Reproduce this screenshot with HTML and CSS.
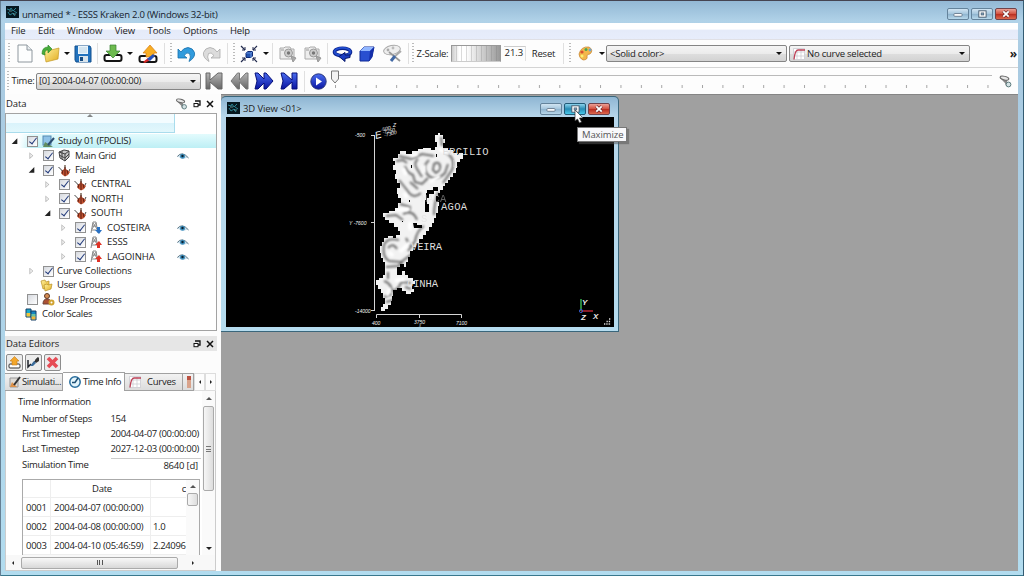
FILE: index.html
```html
<!DOCTYPE html>
<html lang="en">
<head>
<meta charset="utf-8">
<title>unnamed * - ESSS Kraken 2.0</title>
<link rel="stylesheet" href="styles.css">
</head>
<body>
<svg class="defs" width="0" height="0">
  <defs>
    <linearGradient id="gold" x1="0" y1="0" x2="1" y2="1"><stop offset="0" stop-color="#fff3a0"/><stop offset="1" stop-color="#e2ac20"/></linearGradient>
    <linearGradient id="blue" x1="0" y1="0" x2="0" y2="1"><stop offset="0" stop-color="#4a6df0"/><stop offset="1" stop-color="#0a15a0"/></linearGradient>
    <linearGradient id="grey" x1="0" y1="0" x2="0" y2="1"><stop offset="0" stop-color="#b5b5b5"/><stop offset="1" stop-color="#666"/></linearGradient>
    <symbol id="logo" viewBox="0 0 13 12"><rect width="13" height="12" fill="#06171f"/><path d="M1 3l3 1 1-2 2 3 3-3M2 6l2 3 3-2 2 3M8 5l3 2" stroke="#2b8292" fill="none"/><path d="M3 5h3M7 8h3" stroke="#8fd0d0" stroke-width=".6"/></symbol>
    <symbol id="eye" viewBox="0 0 12 8"><path d="M.5 4.5Q5-1 11 5.5Q5 8 .5 4.5" fill="#c9dfec"/><path d="M.3 4.5Q5-1.5 11.6 6" fill="none" stroke="#5b7686"/><circle cx="5.5" cy="4.2" r="2.5" fill="#3f8fbd"/><circle cx="5.5" cy="4" r="1.2" fill="#0b2030"/></symbol>
    <symbol id="field" viewBox="0 0 13 13"><path d="M.5 3l3 3 2 3M12 5l-2 4" stroke="#444" fill="none"/><path d="M7 1v10" stroke="#58402e" stroke-width="1.2"/><path d="M3 8l2-2 2-2 2 2 3 2-2 3-3 1.500-3-2z" fill="#c2512f"/><path d="M5 6l-1 4M9 6l1 4M7 3v9" stroke="#5c2116"/></symbol>
    <symbol id="derrick" viewBox="0 0 13 13"><path d="M1 12L3 1h3l2 11M2 5h5M2 9h6M3 2l4 6M6 2L2 8" stroke="#888" fill="none"/></symbol>
    <symbol id="camera" viewBox="0 0 19 18"><path d="M2 3h4l1-1h5l1 2h3v10H2z" fill="#ededed" stroke="#aaa"/><circle cx="10.5" cy="8" r="4" fill="#ccc" stroke="#999"/><circle cx="10.5" cy="8" r="1.7" fill="#777"/><path d="M3 5h3M13 11l5 2-3 4z" stroke="#999" fill="#aaa"/></symbol>
    <symbol id="float" viewBox="0 0 8 8"><path d="M2 1h5v4H5" fill="none" stroke="#111" stroke-width="1.3"/><rect x="1" y="3.5" width="4" height="3.2" fill="#fff" stroke="#111"/></symbol>
    <symbol id="close" viewBox="0 0 8 8"><path d="M1 1l6 6M7 1L1 7" stroke="#111" stroke-width="1.5"/></symbol>
    <symbol id="curve" viewBox="0 0 12 12"><path d="M.5.5h11v11H.5zM4 1v10M8 1v10M1 4h10M1 8h10" fill="#fff" stroke="#c5c5cd" stroke-width=".7"/><path d="M1 11.5Q2 2 5 2h7" fill="none" stroke="#bd4055" stroke-width="1.3"/></symbol>
    <symbol id="funnel" viewBox="0 0 13 13"><path d="M1 3l5 5 1 3 2-1-1-4 2-3z" fill="#888"/><ellipse cx="5.5" cy="3" rx="4.5" ry="1.8" transform="rotate(14 5 3)" fill="#e6e6e6" stroke="#666"/><circle cx="9.5" cy="9.5" r="2.4" fill="#d4e2e4" stroke="#5c7b7d"/></symbol>
    <symbol id="minimize" viewBox="0 0 22 11"><rect x="6.5" y="5" width="9" height="3" rx="1" fill="#fff" stroke="#64778b"/></symbol>
    <symbol id="maximize" viewBox="0 0 22 11"><rect x="7.5" y="2" width="8" height="7" fill="#fff" stroke="#42566a"/><rect x="10" y="4.3" width="3" height="2.3" fill="#7fa0b9" stroke="#42566a" stroke-width=".7"/></symbol>
    <symbol id="cross" viewBox="0 0 22 11"><path d="M8 2.5l6 6m0-6l-6 6" stroke="#62252a" stroke-width="3.4"/><path d="M8 2.5l6 6m0-6l-6 6" stroke="#fff" stroke-width="2"/></symbol>
  </defs>
</svg>
<div class="app">
  <header class="titlebar">
    <svg class="logo"><use href="#logo"/></svg><h1>unnamed * - ESSS Kraken 2.0 (Windows 32-bit)</h1>
    <div class="controls"><svg class="ctl"><use href="#minimize"/></svg><svg class="ctl"><use href="#maximize"/></svg><svg class="ctl red"><use href="#cross"/></svg></div>
  </header>
  <div class="client">
    <nav class="menubar"><span>File</span><span>Edit</span><span>Window</span><span>View</span><span>Tools</span><span>Options</span><span>Help</span></nav>
    <div class="toolbar main-tools">
      <i class="grip"></i>
      <svg width="16" height="19"><path d="M1 1h9l5 5v12H1z" fill="#fdfefe" stroke="#8e979e"/><path d="M10 1v5h5" fill="#e8edf0" stroke="#8e979e"/></svg>
      <svg width="19" height="18"><path d="M3 5l5-2 2 2 8-2-1 11-12 3z" fill="url(#gold)" stroke="#c49a25" stroke-width=".7"/><path d="M1 9q0-7 6-7V0l4 4-4 4V5q-4 0-3 5z" fill="#48ad3a" stroke="#278223" stroke-width=".6"/></svg>
      <i class="arrow"></i>
      <svg width="18" height="18"><path d="M1 1h15l1 2v14H2l-1-2z" fill="#2272bd" stroke="#12518f"/><rect x="4" y="1" width="10" height="8" fill="#eaf5fc"/><path d="M5 3h8M5 5h8M5 7h8" stroke="#a9c6d8" stroke-width=".7"/><rect x="5" y="11" width="9" height="6" fill="#d9e4ec"/><rect x="6" y="12" width="3" height="4" fill="#154a80"/></svg>
      <i class="sep"></i>
      <svg width="20" height="19"><rect x="1.5" y="11" width="17" height="6" rx="2" fill="#fff" stroke="#151515" stroke-width="2"/><path d="M7 1h6v6h4l-7 7-7-7h4z" fill="#6dba4f" stroke="#368033" stroke-width=".7"/></svg>
      <i class="arrow"></i>
      <svg width="20" height="20"><rect x="1.5" y="12" width="17" height="6" rx="2" fill="#fff" stroke="#151515" stroke-width="2"/><path d="M8 13V9H5l7-8 7 8h-3v4z" fill="#f8ae24" stroke="#d57d16" stroke-width=".7"/><path d="M5 18l5-4 2 2-5 3z" fill="#d52626"/><path d="M9 15l6-5 2 2-5 5z" fill="#2451bd"/></svg>
      <i class="sep"></i><i class="grip"></i>
      <svg width="19" height="17"><path d="M1 4v9h9L7 10.500q3-4 5.500-2 2 3-.5 8 6.500-4 5.500-9Q16 3 11 2.500 6 3 4 7z" fill="#319bdd" stroke="#146eac" stroke-width=".8"/></svg>
      <svg width="19" height="17"><path d="M18 4v9H9l3-2.500q-3-4-5.500-2-2 3 .5 8Q.5 12.500 1.500 7.500 3 3 8 2.500q5 .5 7 4.500z" fill="#dcdcdc" stroke="#aaa" stroke-width=".8"/></svg>
      <i class="sep"></i><i class="grip"></i>
      <svg width="18" height="18"><path d="M1 1l4 4M17 1l-4 4M1 17l4-4M17 17l-4-4" stroke="#222b4e" stroke-width="1.2"/><path d="M5 2v3H2M13 2v3h3M5 16v-3H2M13 16v-3h3" fill="none" stroke="#222b4e"/><path d="M6 8l2-1.500h4.500V11L11 12.500H6z" fill="#2354b0" stroke="#102b74"/><path d="M6 8h5v5M11 8l2-2" stroke="#83aef0" fill="none" stroke-width=".7"/></svg>
      <i class="arrow"></i><i class="sep"></i>
      <svg width="19" height="18"><use href="#camera"/></svg><svg width="19" height="18"><use href="#camera"/></svg>
      <i class="sep"></i>
      <svg width="21" height="16"><ellipse cx="10.5" cy="6" rx="8" ry="3.8" fill="none" stroke="#0b248f" stroke-width="3.6"/><ellipse cx="10.5" cy="5.7" rx="8" ry="3.8" fill="none" stroke="#234ed0" stroke-width="1.8"/><path d="M13 6.500l-6 4 6 5v-3l5-1V9h-5z" fill="#1a3cc0" stroke="#07196c"/></svg>
      <svg width="16" height="16"><path d="M1 5l4-4h10l-2 10-3 4H1z" fill="#294fd0" stroke="#102b96"/><path d="M1 5l4-4h10l-4 4z" fill="#91b6ff"/><path d="M11 5l4-4-2 10-3 4z" fill="#142eaa"/></svg>
      <svg width="21" height="19"><ellipse cx="10" cy="6" rx="8.5" ry="4.5" transform="rotate(-12 10 6)" fill="#eee" stroke="#aaa"/><circle cx="6" cy="6" r="1.4" fill="#aaa"/><circle cx="11" cy="4" r="1.4" fill="#bbb"/><path d="M7 8l11 9" stroke="#999" stroke-width="1.7"/><path d="M19 7l-7 6" stroke="#aaa" stroke-width="2"/><path d="M13 12l-4 5" stroke="#4269a5" stroke-width="3"/></svg>
      <i class="sep"></i><i class="grip"></i>
      <span class="zlabel">Z-Scale:</span><i class="wheel"></i><span class="zvalue">21.3</span><span class="reset">Reset</span>
      <i class="sep"></i><i class="grip"></i>
      <svg width="15" height="15"><path d="M1 8Q3 0 11 1q5 3 1 7-3 0-3 2 1 4-4 4Q1 12 1 8" fill="#f3b64b" stroke="#c4822f" stroke-width=".7"/><circle cx="4" cy="6" r="1.6" fill="#d94f32"/><circle cx="8" cy="3.5" r="1.5" fill="#4aa750"/><circle cx="12" cy="4" r="1.4" fill="#6da5d6"/><circle cx="4" cy="10" r="1.5" fill="#f9ef71"/></svg>
      <i class="arrow"></i>
      <div class="combo">&lt;Solid color&gt;<i class="arrow"></i></div>
      <div class="combo"><svg width="12" height="12"><use href="#curve"/></svg>No curve selected<i class="arrow"></i></div>
      <b class="more">»</b>
    </div>
    <div class="toolbar time-tools">
      <i class="grip"></i><span class="timelabel">Time:</span><div class="combo time">[0] 2004-04-07 (00:00:00)<i class="arrow"></i></div>
      <svg width="19" height="18"><path d="M1 1h4v7l8-7h4v16h-4l-8-7v7H1z" fill="url(#grey)" stroke="#666"/></svg>
      <svg width="19" height="18"><path d="M9.500 1v7L16 1h2v16h-2l-6.500-7v7h-2L1 9l6.500-8z" fill="url(#grey)" stroke="#777"/></svg>
      <svg width="20" height="18"><path d="M1 1h3l6 6V1h2l7 8-7 8h-2v-6l-6 6H1l2-8z" fill="url(#blue)" stroke="#07107a"/></svg>
      <svg width="19" height="18"><path d="M1 1h3l8 7V1h5v16h-5v-7l-8 7H1l2-8z" fill="url(#blue)" stroke="#07107a"/></svg>
      <i class="sep"></i>
      <svg width="17" height="17"><circle cx="8.5" cy="8.5" r="7.7" fill="url(#blue)" stroke="#28347b"/><path d="M6 4.5l6 4-6 4z" fill="#fff"/></svg>
      <svg class="slider" width="664" height="24"><defs><pattern id="ticks" x="7" width="20.39" height="24" patternUnits="userSpaceOnUse"><path d="M.5 16v3" stroke="#a5a5a5"/></pattern></defs><path d="M8 6.500H664" stroke="#bababa"/><rect x="5" width="659" height="24" fill="url(#ticks)"/><path d="M3.500 2h7v8L7 14l-3.500-4z" fill="#f2f2f2" stroke="#777"/></svg>
      <svg width="13" height="13"><use href="#funnel"/></svg>
    </div>
    <main class="body">
      <aside class="sidebar">
        <div class="docktitle"><h2>Data</h2><svg width="13" height="12"><use href="#funnel"/></svg><svg width="8" height="8"><use href="#float"/></svg><svg width="8" height="8"><use href="#close"/></svg></div>
        <section class="tree">
          <div class="treehead"><i></i></div>
          <div class="row l0 selected"><i class="open"></i><i class="check on"></i><svg class="ico"><rect x="1" y="1" width="8" height="9" fill="#8fc2e7" stroke="#5689b2"/><path d="M1 12l2-5 8 5z" fill="#628d60"/><path d="M6 10l6-7" stroke="#2c4d70" stroke-width="2"/></svg><span>Study 01 (FPOLIS)</span></div>
          <div class="row l1"><i class="shut"></i><i class="check on"></i><svg class="ico"><path d="M1 3l5-2 5 1v6l-4 4-5-3z" fill="#c8c8c8" stroke="#444"/><path d="M1 3l6 2 4-3M7 5v7M4 2v8M1 6l6 3 4-4" stroke="#444" fill="none"/></svg><span>Main Grid</span><svg class="eye"><use href="#eye"/></svg></div>
          <div class="row l1"><i class="open"></i><i class="check on"></i><svg class="ico"><use href="#field"/></svg><span>Field</span></div>
          <div class="row l2"><i class="shut"></i><i class="check on"></i><svg class="ico"><use href="#field"/></svg><span class="caps">CENTRAL</span></div>
          <div class="row l2"><i class="shut"></i><i class="check on"></i><svg class="ico"><use href="#field"/></svg><span class="caps">NORTH</span></div>
          <div class="row l2"><i class="open"></i><i class="check on"></i><svg class="ico"><use href="#field"/></svg><span class="caps">SOUTH</span></div>
          <div class="row l3"><i class="shut"></i><i class="check on"></i><svg class="ico"><use href="#derrick"/><path d="M7 6h3v3h2l-3 4-4-4h2z" fill="#2a72c4"/></svg><span class="caps">COSTEIRA</span><svg class="eye"><use href="#eye"/></svg></div>
          <div class="row l3"><i class="shut"></i><i class="check on"></i><svg class="ico"><use href="#derrick"/><path d="M7 12h3V9h2L9 5 5 9h2z" fill="#df3327"/></svg><span class="caps">ESSS</span><svg class="eye"><use href="#eye"/></svg></div>
          <div class="row l3"><i class="shut"></i><i class="check on"></i><svg class="ico"><use href="#derrick"/><path d="M7 12h3V9h2L9 5 5 9h2z" fill="#df3327"/></svg><span class="caps">LAGOINHA</span><svg class="eye"><use href="#eye"/></svg></div>
          <div class="row l1"><i class="shut"></i><i class="check on"></i><span class="curves">Curve Collections</span></div>
          <div class="row groups"><svg class="ico"><path d="M1 2l4-1 1 2 3-1v6l-6 2z" fill="url(#gold)" stroke="#b99026" stroke-width=".7"/><path d="M4 6l3-1 1 1 4-1-1 5-6 2z" fill="url(#gold)" stroke="#b99026" stroke-width=".7"/></svg><span>User Groups</span></div>
          <div class="row procs"><i class="check"></i><svg class="ico"><circle cx="5" cy="3" r="2.5" fill="#d58c52" stroke="#5b3827"/><path d="M1 11q0-5 4-5t5 5z" fill="#ac5134" stroke="#6d4337"/><circle cx="9.5" cy="9.5" r="2" fill="#fff" stroke="#d0a332" stroke-width="2"/></svg><span>User Processes</span></div>
          <div class="row scales"><svg class="ico"><path d="M1 1h5v8H1z" fill="#19aacb" stroke="#163e66"/><path d="M1.500 5h4v3.500h-4z" fill="#f0c43a"/><path d="M6 3h5v9H6z" fill="#1586c1" stroke="#163e66"/><path d="M6.500 6h4v3h-4z" fill="#6ac3a0"/><path d="M6.500 8.500h4v3h-4z" fill="#f0b63a"/></svg><span>Color Scales</span></div>
        </section>
        <div class="docktitle editors"><h2>Data Editors</h2><svg width="8" height="8"><use href="#float"/></svg><svg width="8" height="8"><use href="#close"/></svg></div>
        <div class="buttons">
          <svg><rect x="2" y="9" width="11" height="4" rx="1" fill="#fff" stroke="#333"/><path d="M5 10V6H3l4.500-4.500L12 6h-2v4z" fill="#f3a72c" stroke="#c27a18" stroke-width=".6"/></svg>
          <svg><path d="M2 5v7l3-3M8 8l4-5" stroke="#20242c" stroke-width="1.5" fill="none"/><path d="M4 11l4-5 2 2-3 3z" fill="#3b6d9c"/><path d="M9 5l3-3 1 1v3l-3 2z" fill="#333"/></svg>
          <svg><path d="M3 3l9 9M12 3l-9 9" stroke="#e64c55" stroke-width="3.6"/></svg>
        </div>
        <div class="tabs">
          <div class="tab sim"><svg width="12" height="12"><path d="M1 2h8v9H1z" fill="#dedbd6" stroke="#999"/><path d="M1 11l2-5 5 5z" fill="#dd9148"/><path d="M5 9l6-8" stroke="#333" stroke-width="2"/></svg>Simulati...</div>
          <div class="tab active"><svg width="12" height="12"><circle cx="6" cy="6" r="5.2" fill="#e4f5fc" stroke="#286d9d" stroke-width="1.5"/><path d="M9 2L6 6.500H3" stroke="#205075" fill="none" stroke-width="1.5"/></svg>Time Info</div>
          <div class="tab crv"><svg width="12" height="12"><use href="#curve"/></svg>Curves</div>
          <div class="tab cut"><i></i></div>
          <div class="scroller"><i class="left"></i></div><div class="scroller"><i class="right"></i></div>
        </div>
        <section class="pane">
          <div class="form">
            <h3>Time Information</h3>
            <dl><dt>Number of Steps</dt><dd>154</dd><dt>First Timestep</dt><dd>2004-04-07 (00:00:00)</dd><dt>Last Timestep</dt><dd>2027-12-03 (00:00:00)</dd><dt>Simulation Time</dt><dd class="field">8640 [d]</dd></dl>
            <div class="tablewrap">
              <div class="table"><b></b><b class="th">Date</b><b class="c">c</b><span>0001</span><span>2004-04-07 (00:00:00)</span><span></span><span>0002</span><span>2004-04-08 (00:00:00)</span><span>1.0</span><span>0003</span><span>2004-04-10 (05:46:59)</span><span>2.24096</span></div>
              <div class="vscroll inner"><i class="up"></i><div class="thumb"></div></div>
            </div>
          </div>
          <div class="vscroll"><i class="up"></i><div class="thumb"><span></span></div><i class="down"></i></div>
          <div class="hscroll"><i class="left"></i><div class="thumb"><span></span></div><i class="right"></i></div>
        </section>
      </aside>
      <section class="workspace">
        <div class="mdi">
          <header class="mdititle"><svg class="logo"><use href="#logo"/></svg><h2>3D View &lt;01&gt;</h2><div class="controls"><svg class="ctl"><use href="#minimize"/></svg><svg class="ctl hot"><use href="#maximize"/></svg><svg class="ctl red"><use href="#cross"/></svg></div></header>
          <svg class="scene" viewBox="226 117 388 210">
            <defs>
              <path id="coast" d="M435 135H438V133H440V135H443V139H445V143H443V148H448V150H453V153H457V155H459V153H463V159H460V162H457V168H456V173H453V177H450V180H448V183H445V186H443V190H440V193H438V196H436V202H439V206H438V213H436V218H434V223H432V227H429V231H426V235H423V239H419V243H416V247H413V251H410V257H408V262H406V267H404V271H405V275H408V278H413V281H415V284H412V289H414V292H411V294H406V291H402V288H397V290H393V296H392V301H391V305H388V309H385V311H381V307H383V304H385V298H383V293H381V289H378V285H376V280H379V278H383V275H385V262H383V258H381V253H380V246H382V242H384V238H388V236H393V238H396V235H400V231H398V227H394V223H389V220H385V217H383V213H389V211H395V208H398V203H401V198H398V194H397V188H400V183H397V179H395V174H396V170H393V165H395V161H393V158H398V154H400V151H406V154H412V151H418V149H423V148H431V150H435V147H437V142H435z"/>
              <clipPath id="land"><use href="#coast"/></clipPath>
              <filter id="soft" x="-20%" y="-20%" width="140%" height="140%"><feGaussianBlur stdDeviation="1.3"/></filter>
            </defs>
            <rect x="226" y="117" width="388" height="210" fill="#000"/>
            <use href="#coast" fill="#f2f2f2"/>
            <g clip-path="url(#land)">
              <g fill="none" stroke="#6c6c6c" stroke-width="2" filter="url(#soft)">
                <path d="M396 161l7-1 4 3M405 166q1 6 8 9l2 7 7 2 6-6M418 159q-5 4-1 10l5 8M429 160q-7 6-2 14 8 9 18-1l3-9M434 164q4-3 6 1 1 5-4 8l-3-3zM446 153q10 5 6 17l-9 13M399 156l12 3 11-5 12 2M399 180l8 10q6 10 14 3M410 182l8 7M400 204l10 3-1 6M403 214q10-5 14 6M386 216l10-1 7 5M424 226q-7 4-9 15l-7 10M441 137l1 9M438 192q-4 12-4 23"/>
                <path d="M399 240q-12-3-15 5-2 12 5 16l12 1 11-8M388 248q5-6 9 1M386 267l12-1 5-4M406 238l4 8M384 281q7 2 8 10 7-1 9-9l10 1M386 302l8-2M384 297l8-3M388 272v7M405 287l6 2"/>
              </g>
              <g fill="none" stroke="#fff" stroke-width="3.5" filter="url(#soft)"><path d="M439 149l10 5M403 168l3 7M411 156l7-2M430 182l10-6M404 193l3 5M396 210l14-1M389 252l4 4M400 252l10-10M395 281l10-2M390 288l-3 8M424 165v8M410 222v8M437 168v1"/></g>
            </g>
            <g fill="#000"><path d="M427 193v-3h6v-3h5v4h-4v3h-5v4h-2v6h2v8h-4v-12h1v-7z"/><path d="M413 223h4v2h5v3h-8z"/><path d="M397 267h3v-3h4v7h-2v4h-5z"/><path d="M411 165h1v3h-1zM436 154h1v3h-1zM409 200h1v2h-1zM402 221h1v1h-1z"/></g>
            <g fill="none" stroke="#d5d5d5"><path d="M374.500 135v176M371 135.500h4M371 222.500h4M371 310.500h4M376.500 318v-3.500h85v3.500M419.500 314v4"/></g>
            <g class="places"><text x="442.5" y="155" textLength="46">ERCILIO</text><text x="452" y="167" opacity=".5">L</text><text x="421" y="202" opacity=".45">MACA</text><text x="441" y="209.5" textLength="26">AGOA</text><text x="421" y="222" opacity=".6">S</text><text x="411" y="250" textLength="31">VEIRA</text><text x="407" y="287" textLength="31">OINHA</text></g>
            <g class="axes"><text x="355" y="137">-500</text><text x="349" y="225">Y -7600</text><text x="355" y="313">-14000</text><text x="372" y="324.5">400</text><text x="414" y="323.5">3750</text><text x="456" y="324.5">7100</text><text class="tiny" x="419" y="326.5">X</text><text x="393" y="127">Z</text></g>
            <g class="axes" transform="rotate(-14 380 135)"><text class="east" x="375" y="138">E</text><text x="382" y="132">-500</text><text x="383" y="135">-7250</text><text x="384" y="138">-7300</text></g>
            <path d="M581 311V299" stroke="#29833b" stroke-width="2"/><path d="M581 311h12" stroke="#b62632" stroke-width="1.5"/><circle cx="581" cy="311" r="1.6" fill="none" stroke="#3454be"/>
            <g class="triad"><text x="582" y="305">Y</text><text x="581" y="320">Z</text><text x="593" y="319">X</text></g>
            <path d="M604 324h7M606.500 321.500h4.500M609 319h2" stroke="#ddd" stroke-width="1.5" stroke-dasharray="1.300 1"/>
          </svg>
          <div class="tooltip">Maximize</div>
          <svg class="cursor" viewBox="0 0 10 15"><path d="M1 1v11l2.500-2 2 4 2-1-2-4H9z" fill="#fff" stroke="#333" stroke-width=".7"/></svg>
        </div>
      </section>
    </main>
  </div>
</div>
</body>
</html>
```
FILE: styles.css
```css
* { box-sizing: border-box; }
body { margin: 0; width: 1024px; height: 576px; overflow: hidden; font: 9.5px/12px "Open Sans", "Noto Sans", sans-serif; letter-spacing: -.23px; color: #222; }
.defs { position: absolute; }
svg { display: block; flex: none; }
h1, h2, h3, dl, dd { margin: 0; font-size: inherit; font-weight: 400; }
.app { height: 576px; display: flex; flex-direction: column; padding: 2px 5px 5px; background: linear-gradient(#93b8d5, #b0d2e8 20px, #a9cae1 60px, #b2dcef); border-top: 1px solid #454452; border-right: 1px solid #345c72; box-shadow: inset 1px 0 #668094, inset 0 -1px #39788d; }
.titlebar { height: 20px; display: flex; align-items: center; flex: none; padding: 1px 0 0 1px; }
.logo { width: 13px; height: 12px; }
.titlebar .logo { margin-top: -3px; }
.titlebar h1 { margin: 2px 0 0 3px; font-size: 9.5px; letter-spacing: -.22px; color: #15212c; white-space: nowrap; }
.titlebar .controls { margin-right: 1px; }
.controls { margin-left: auto; display: flex; gap: 2px; }
.ctl { width: 22px; height: 12px; border: 1px solid #64839b; border-radius: 2px; background: linear-gradient(#d1e4f2, #a5c6dd 48%, #8fb4cf 52%, #b8d8eb); }
.ctl.hot { background: linear-gradient(#8ad3ed, #278bb4 50%, #48c8e9); border-color: #235b77; }
.ctl.red { background: linear-gradient(#eba095, #d35241 48%, #b92d20 52%, #dd684e); border-color: #70424a; }
.client { flex: 1; min-height: 0; display: flex; flex-direction: column; background: #fff; }
.menubar { height: 17px; flex: none; display: flex; align-items: center; gap: 12.6px; padding: 0 6px; background: linear-gradient(#fff 0 38%, #e5ebf9 45%, #e7edfb); border-bottom: 1px solid #e0e0e5; letter-spacing: -.13px; }
.toolbar { display: grid; align-items: center; justify-items: center; flex: none; background: #fdfdfd; border-bottom: 1px solid #d4d4d4; white-space: nowrap; }
.main-tools { height: 28px; grid-template-columns: 7px 25px 26px 8px 24px 5px 26px 8px 27px 7px 5px 26px 25px 7px 5px 26px 8px 5px 24px 26px 5px 24px 25px 27px 5px 4px 35px 52px 25px 33px 7px 5px 26px 8px 181px 185px 1fr; }
.time-tools { height: 26px; grid-template-columns: 5px 26px 165px 26px 24px 26px 24px 7px 20px 664px 1fr; border: 0; }
.grip { width: 2px; height: 21px; background: repeating-linear-gradient(#bbb 0 1px, transparent 1px 3px); }
.sep { width: 1px; height: 21px; background: #e0e0e0; }
.arrow { width: 0; height: 0; border: 3px solid transparent; border-top-color: #111; border-bottom: 0; }
.zlabel { letter-spacing: -.25px; }
.wheel { width: 50px; height: 17px; border: 1px solid #999; border-bottom-color: #ccc; background: repeating-linear-gradient(90deg, transparent 0 4px, #7774 4px 5px), linear-gradient(90deg, #ccc, #fff 15%, #fff 30%, #ccc 65%, #999); }
.zvalue { border-top: 1px solid #ccc; border-right: 1px solid #e1e1e1; height: 15px; width: 22px; padding-left: 1px; letter-spacing: 0; }
.combo { width: 181px; height: 17px; display: flex; align-items: center; gap: 3px; padding: 0 4px 0 3px; border: 1px solid #858585; border-radius: 2px; background: linear-gradient(#f5f5f5, #ebebeb 50%, #dedede 52%, #d2d2d2); }
.combo svg { margin-right: -1px; }
.combo .arrow { margin-left: auto; }
.combo.time { width: 165px; padding: 0 4px 0 2px; letter-spacing: -.29px; }
.more { justify-self: end; margin-right: 1px; font-size: 12px; }
.body { flex: 1; min-height: 0; display: flex; }
.sidebar { width: 216px; flex: none; padding: 1px 4px 0 0; display: flex; flex-direction: column; background: #fcfcfc; }
.docktitle { height: 18px; flex: none; display: flex; align-items: center; gap: 5px; padding: 0 3px 0 1px; }
.docktitle h2 { flex: 1; letter-spacing: -.1px; }
.tree { height: 218px; flex: none; border: 1px solid #a3a3a3; background: #fff; }
.treehead { width: 169px; height: 19px; margin-bottom: 1px; border-right: 1px solid #a9dcec; border-bottom: 1px solid #a9dcec; background: linear-gradient(#f3fcff 48%, #d9f3fb 50%, #e2f7fc); display: flex; justify-content: center; }
.treehead i, .up { width: 0; height: 0; border: 3px solid transparent; border-bottom-color: #555; border-top: 0; }
.treehead i { opacity: .7; }
.row { height: 14.43px; display: flex; align-items: center; gap: 3px; padding-right: 27px; letter-spacing: -.26px; }
.row span { white-space: nowrap; }
.row .caps { letter-spacing: -.05px; }
.row .curves { letter-spacing: -.1px; }
.eye { width: 12px; height: 8px; margin-left: auto; }
.ico { width: 13px; height: 13px; margin: 0 1px 0 1px; }
.l0 { padding-left: 5px; } .l1 { padding-left: 22px; } .l2 { padding-left: 38px; } .l3 { padding-left: 54px; }
.groups { padding-left: 33px; } .procs { padding-left: 21px; } .scales { padding-left: 18px; }
.l0 .ico, .procs .ico { margin-right: 0; }
.selected { background: linear-gradient(90deg, #fff 6%, transparent 12%), linear-gradient(#e3fbfd, #bdeff5); }
.open, .shut { width: 7px; height: 6px; margin-right: 5px; background: #222; clip-path: polygon(90% 0, 90% 95%, 10% 95%); }
.l0 .open { margin-right: 6px; }
.shut { height: 7px; background: #b5b5b5; clip-path: polygon(20% 0, 75% 50%, 20% 100%, 20% 0, 34% 22%, 34% 78%, 58% 50%, 34% 22%); }
.check { width: 11px; height: 11px; flex: none; border: 1px solid #919191; background: linear-gradient(135deg, #d6d9df, #fff); display: grid; place-items: center; }
.check.on::after { content: ""; width: 3px; height: 7px; border: solid #243c7c; border-width: 0 1.5px 1.5px 0; transform: translateY(-1px) rotate(38deg); }
.docktitle.editors { height: 15px; margin-top: 5px; background: #e6e6e6; }
.buttons { display: flex; gap: 2px; padding: 3px 1px 1px; flex: none; }
.buttons svg { width: 17px; height: 17px; border: 1px solid #8d8d8d; border-radius: 2px; background: #ececec; }
.tabs { height: 19px; flex: none; display: flex; align-items: flex-end; white-space: nowrap; }
.tab { height: 18px; display: flex; align-items: center; gap: 3px; padding-left: 4px; overflow: hidden; border: 1px solid #a1a1a1; border-left-width: 0; background: linear-gradient(#f2f2f2, #dcdcdc); }
.sim { width: 58px; gap: 1px; letter-spacing: -.38px; } .active { width: 62px; height: 19px; padding-left: 6px; gap: 2px; letter-spacing: -.4px; background: #fff; border-bottom: 0; } .crv { width: 58px; gap: 6px; padding-left: 4px; } .cut { width: 11px; padding-left: 4px; }
.cut i { width: 4px; height: 12px; background: linear-gradient(#bb5141 35%, #d9a38b 35%); }
.scroller { width: 11px; height: 18px; display: grid; place-items: center; border: 1px solid #ddd; }
.left, .right { width: 0; height: 0; border: 2.5px solid transparent; }
.left { border-right-color: #222; border-left: 0; } .right { border-left-color: #222; border-right: 0; }
.pane { flex: 1; min-height: 0; display: grid; grid-template: 1fr 15px / 196px 13px; border: 1px solid #ccc; border-top: 0; background: #fff; width: 211px; }
.form { min-height: 0; overflow: hidden; padding: 5px 1px 0 12px; }
.form h3 { letter-spacing: -.25px; }
dl { display: grid; grid-template-columns: 88.5px 1fr; grid-auto-rows: 15.4px; align-items: center; padding: 3px 0 0 4px; white-space: nowrap; }
dt { letter-spacing: -.33px; }
dd { letter-spacing: -.32px; }
.field { height: 14px; border-top: 1px solid #ccc; text-align: right; padding: 1px 3px 0 0; letter-spacing: -.2px; }
.tablewrap { display: flex; margin: 6px 0 0 4px; width: 178px; height: 90px; border: 1px solid #aaa; border-bottom: 0; }
.table { width: 163px; flex: none; display: grid; grid-template-columns: 28px 100px 35px; grid-template-rows: 18px repeat(3, 19.3px); white-space: nowrap; letter-spacing: -.28px; }
.table > * { border-right: 1px solid #eee; border-bottom: 1px solid #eee; padding: 4px 0 0 3px; font-weight: 400; }
.table > :nth-child(3n) { padding-left: 2px; border-right: 0; letter-spacing: -.36px; }
.table .th { text-align: center; padding-top: 3px; } .table .c { text-align: right; padding-top: 3px; }
.vscroll { display: flex; flex-direction: column; align-items: center; padding-top: 6px; background: #fafafa; }
.vscroll .thumb { width: 11px; height: 85px; margin-top: 6px; display: grid; place-items: center; border: 1px solid #aaa; border-radius: 2px; background: linear-gradient(90deg, #f6f6f6, #ddd); }
.vscroll .thumb span { width: 5px; height: 6px; background: repeating-linear-gradient(#777 0 1px, transparent 1px 2.5px); }
.vscroll .down { width: 0; border: 3px solid transparent; border-top-color: #222; border-bottom: 0; margin-top: auto; margin-bottom: 5px; }
.inner { flex: 1; padding-top: 5px; } .inner .thumb { height: 13px; margin-top: 5px; }
.hscroll { grid-column: 1 / 3; display: flex; align-items: center; padding: 0 20px 0 6px; background: #f8f8f8; gap: 7px; }
.hscroll .right { margin-left: 7px; }
.hscroll .thumb { width: 157px; height: 12px; display: grid; place-items: center; border: 1px solid #aaa; border-radius: 2px; background: linear-gradient(#f8f8f8, #d8d8d8); }
.hscroll .thumb span { width: 6px; height: 5px; background: repeating-linear-gradient(90deg, #555 0 1px, transparent 1px 2.5px); }
.workspace { flex: 1; min-width: 0; padding-top: 2px; background: #a0a0a0; box-shadow: inset 0 1px #858585; }
.mdi { position: relative; width: 398px; height: 236px; padding: 1px 5px 5px; border: solid #3a667b; border-width: 1px 1px 1px 0; border-radius: 5px 5px 0 0; background: linear-gradient(#8fb6d3, #b7d6ea 20px, #b5dcef); }
.mdititle { height: 19px; display: flex; align-items: center; padding: 2px 3px 0 1px; }
.mdititle h2 { margin-left: 3px; letter-spacing: -.1px; }
.mdititle .logo { margin-top: -2px; }
.scene { width: 388px; height: 210px; }
.places { font: 10.5px "Liberation Mono", monospace; fill: #dedede; letter-spacing: 0; }
.axes { font: italic 5px "Liberation Sans", sans-serif; fill: #f4f4f4; letter-spacing: 0; }
.axes .tiny { font-size: 3px; }
.axes .east { font-size: 10px; }
.triad { font: italic 700 8px "Liberation Sans", sans-serif; fill: #eee; }
.tooltip { position: absolute; left: 356px; top: 30px; width: 50px; height: 15px; padding: 1px 0 0 4px; border: 1px solid #777; background: #f8f8fb; box-shadow: 2px 2px 1px #5558; color: #555; letter-spacing: -.1px; }
.cursor { position: absolute; left: 353px; top: 12px; width: 10px; height: 15px; }
```
